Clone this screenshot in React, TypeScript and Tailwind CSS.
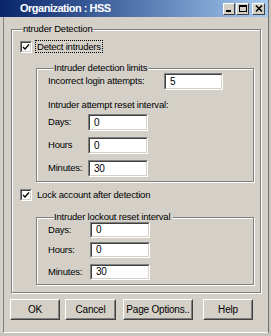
import React from 'react';

const face = { fontFamily: '"Liberation Sans", Arial, sans-serif' };

function Field({ value, width, height = 17 }: { value: string; width: number; height?: number }) {
  return (
    <div
      className="border border-t-[#808080] border-l-[#808080] border-b-white border-r-white"
      style={{ width, height }}
    >
      <div className="h-full border border-t-[#404040] border-l-[#404040] border-b-[#d4d0c8] border-r-[#d4d0c8] bg-white flex items-center pl-[4px] text-[10px] leading-none">
        {value}
      </div>
    </div>
  );
}

function CheckBox() {
  return (
    <div className="w-[12px] h-[12px] border border-t-[#808080] border-l-[#808080] border-b-white border-r-white shrink-0">
      <div className="w-full h-full border border-t-[#404040] border-l-[#404040] border-b-[#d4d0c8] border-r-[#d4d0c8] bg-white flex items-center justify-center">
        <svg width="8" height="8" viewBox="0 0 8 8">
          <path d="M1 4 L3 6 L7 1.5" fill="none" stroke="#000" strokeWidth="1.3" />
        </svg>
      </div>
    </div>
  );
}

function Button({ label, width }: { label: string; width: number }) {
  return (
    <div
      className="h-[21px] border border-t-white border-l-white border-b-[#404040] border-r-[#404040]"
      style={{ width }}
    >
      <div className="h-full border border-transparent border-b-[#808080] border-r-[#808080] flex items-center justify-center text-[10px] tracking-[-0.2px]">
        {label}
      </div>
    </div>
  );
}

function TitleButton({ children, width }: { children: React.ReactNode; width: number }) {
  return (
    <div
      className="h-[12px] bg-[#d4d0c8] border border-t-white border-l-white border-b-[#404040] border-r-[#404040] flex items-center justify-center"
      style={{ width }}
    >
      {children}
    </div>
  );
}

export default function App() {
  return (
    <div className="w-[271px] h-[336px] bg-[#c8c5bf] overflow-hidden text-black" style={face}>
      <div className="w-[269px] h-[333px] flex flex-col border-r border-[#707070] bg-[#d4d0c8]">
        {/* Title bar */}
        <div className="h-[17px] shrink-0 bg-gradient-to-r from-[#0a246a] to-[#a6caf0] flex items-center pl-[20px] pr-[3px]">
          <span className="text-white font-bold text-[11px] tracking-[-0.5px] leading-none">Organization : HSS</span>
          <div className="ml-auto flex gap-[1px]">
            <TitleButton width={12}>
              <div className="w-[5px] h-[2px] bg-black mt-[5px] -ml-[1px]" />
            </TitleButton>
            <TitleButton width={13}>
              <div className="w-[8px] h-[7px] border border-black border-t-2" />
            </TitleButton>
            <div className="w-[1px]" />
            <TitleButton width={13}>
              <svg width="8" height="7" viewBox="0 0 8 7">
                <path d="M1 0.5 L7 6.5 M7 0.5 L1 6.5" stroke="#000" strokeWidth="1.5" />
              </svg>
            </TitleButton>
          </div>
        </div>

        {/* Body */}
        <div className="flex-1 ml-[3px] border-l border-b border-l-[#808080] border-b-white flex flex-col text-[9.5px] tracking-[-0.2px]">
          <fieldset className="ml-[7px] mt-[7px] w-[250px] border border-[#808080] shadow-[inset_1px_1px_0_#fff,1px_1px_0_#fff] pl-[8px] pb-[7px]">
            <legend className="ml-[3px] leading-[10px] bg-[#d4d0c8] pr-[1px]">ntruder Detection</legend>

            <div className="flex items-center mt-[6px] h-[13px]">
              <CheckBox />
              <span className="ml-[3px] border border-dotted border-black px-[1px] leading-[11px]">Detect intruders</span>
            </div>

            <fieldset className="ml-[16px] mt-[10px] w-[218px] border border-[#808080] shadow-[inset_1px_1px_0_#fff,1px_1px_0_#fff] pl-[11px] pb-[4px]">
              <legend className="ml-[6px] leading-[10px] bg-[#d4d0c8] pr-[1px]">Intruder detection limits</legend>
              <div className="flex items-center">
                <span className="w-[116px]">Incorrect login attempts:</span>
                <Field value="5" width={59} />
              </div>
              <div className="mt-[9px] leading-[12px]">Intruder attempt reset interval:</div>
              <div className="flex items-center mt-[3px]">
                <span className="w-[40px]">Days:</span>
                <Field value="0" width={60} />
              </div>
              <div className="flex items-center mt-[6px]">
                <span className="w-[40px]">Hours</span>
                <Field value="0" width={60} />
              </div>
              <div className="flex items-center mt-[6px]">
                <span className="w-[40px]">Minutes:</span>
                <Field value="30" width={60} />
              </div>
            </fieldset>

            <div className="flex items-center mt-[6px] h-[13px]">
              <CheckBox />
              <span className="ml-[5px] leading-[11px]">Lock account after detection</span>
            </div>

            <fieldset className="ml-[16px] mt-[11px] w-[218px] border border-[#808080] shadow-[inset_1px_1px_0_#fff,1px_1px_0_#fff] pl-[11px] pb-[4px]">
              <legend className="ml-[6px] leading-[10px] bg-[#d4d0c8] pr-[3px]">Intruder lockout reset interval</legend>
              <div className="flex items-center">
                <span className="w-[42px]">Days:</span>
                <Field value="0" width={60} height={16} />
              </div>
              <div className="flex items-center mt-[4px]">
                <span className="w-[42px]">Hours:</span>
                <Field value="0" width={60} height={16} />
              </div>
              <div className="flex items-center mt-[6px]">
                <span className="w-[42px]">Minutes:</span>
                <Field value="30" width={60} height={16} />
              </div>
            </fieldset>
          </fieldset>

          <div className="flex mt-[6px] ml-[6px]">
            <Button label="OK" width={50} />
            <div className="ml-[5px]"><Button label="Cancel" width={51} /></div>
            <div className="ml-[7px]"><Button label="Page Options.." width={70} /></div>
            <div className="ml-[10px]"><Button label="Help" width={50} /></div>
          </div>
        </div>
      </div>
    </div>
  );
}
